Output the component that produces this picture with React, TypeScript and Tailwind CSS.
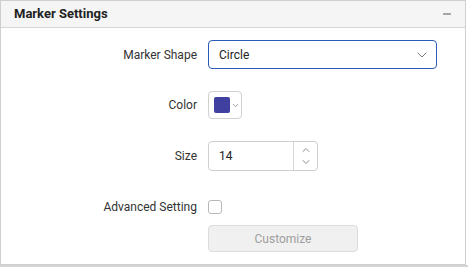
import { ChevronDown, ChevronUp, Minus } from "lucide-react";

function Row({ label, children, className }: { label?: string; children: React.ReactNode; className?: string }) {
  return (
    <div className={"flex items-center " + (className ?? "")}>
      <div className="w-[197px] shrink-0 pr-[1px] text-right text-[12px] text-[#333]">{label}</div>
      <div className="ml-[10px]">{children}</div>
    </div>
  );
}

export default function App() {
  return (
    <div className="h-[267px] w-[468px] bg-white" style={{ fontFamily: "Roboto, 'Liberation Sans', sans-serif" }}>
      <div className="h-[265px] w-[466px] border border-[#cfcfcf] bg-white">
        <div className="flex h-[27px] items-center justify-between border-b border-[#d6d6d6] bg-[#f5f5f5] pl-[13px] pr-[12px]">
          <span className="text-[13px] font-bold text-[#222]">Marker Settings</span>
          <Minus className="h-[12px] w-[12px] text-[#555]" strokeWidth={2} />
        </div>

        <div className="flex flex-col pt-[12px]">
          <Row label="Marker Shape">
            <div className="flex h-[29px] w-[229px] items-center justify-between rounded-[4px] border border-[#2a5bb8] pl-[10px] pr-[6px] text-[12px] text-[#222]">
              <span>Circle</span>
              <ChevronDown className="h-[16px] w-[16px] text-[#666]" strokeWidth={1.3} />
            </div>
          </Row>

          <Row label="Color" className="mt-[22px]">
            <div className="flex h-[28px] w-[34px] items-center rounded-[4px] border border-[#d0d0d0] pl-[5px]">
              <div className="h-[16px] w-[16px] rounded-[2px] bg-[#4040a0]" />
              <ChevronDown className="ml-[1px] h-[9px] w-[9px] text-[#555]" strokeWidth={1.5} />
            </div>
          </Row>

          <Row label="Size" className="mt-[22px]">
            <div className="flex h-[30px] w-[110px] rounded-[4px] border border-[#cfcfcf] text-[12px] text-[#222]">
              <div className="flex flex-1 items-center pl-[10px]">14</div>
              <div className="flex w-[24px] flex-col items-center justify-center border-l border-[#d6d6d6]">
                <ChevronUp className="h-[12px] w-[12px] text-[#666]" strokeWidth={1.5} />
                <ChevronDown className="h-[12px] w-[12px] text-[#666]" strokeWidth={1.5} />
              </div>
            </div>
          </Row>

          <Row label="Advanced Setting" className="mt-[27px]">
            <div className="h-[14px] w-[14px] rounded-[3px] border border-[#b8b8b8] bg-white" />
          </Row>

          <Row className="mt-[9px]">
            <div className="flex h-[27px] w-[150px] items-center justify-center rounded-[4px] border border-[#dcdcdc] bg-[#f0f0f0] text-[12px] text-[#9e9e9e]">
              Customize
            </div>
          </Row>
        </div>
      </div>
      <div className="h-[2px] w-[468px] bg-[#d4d4d4]" />
    </div>
  );
}
